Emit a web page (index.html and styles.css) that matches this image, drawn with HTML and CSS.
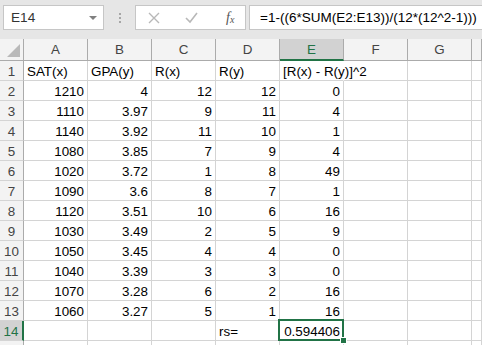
FILE: index.html
```html
<!DOCTYPE html>
<html lang="en">
<head>
    <meta charset="UTF-8">
    <title>Spearman rank - Sheet1</title>
    <link rel="stylesheet" href="styles.css">
</head>
<body>
    <div class="toolbar">
        <div class="name-box">
            <span>E14</span>
            <span class="arrow"></span>
        </div>
        <div class="grip">
            <i></i><i></i><i></i>
        </div>
        <div class="fx-tools">
            <svg width="12" height="12" viewBox="0 0 12 12"><path d="M1 1 L11 11 M11 1 L1 11" stroke="#b8b8b8" stroke-width="1.4" fill="none"/></svg>
            <svg width="13" height="12" viewBox="0 0 13 12"><path d="M1 6 L5 10 L12 1" stroke="#b8b8b8" stroke-width="1.6" fill="none"/></svg>
            <span class="fx">f<sub>x</sub></span>
        </div>
        <div class="formula">=1-((6*SUM(E2:E13))/(12*(12^2-1)))</div>
    </div>

    <div class="sheet">
        <div class="hd corner"><span class="tri"></span></div>
        <div class="hd">A</div><div class="hd">B</div><div class="hd">C</div><div class="hd">D</div>
        <div class="hd sel-col">E</div><div class="hd">F</div><div class="hd">G</div><div class="hd"></div>

        <div class="rh">1</div><div class="c">SAT(x)</div><div class="c">GPA(y)</div><div class="c">R(x)</div><div class="c">R(y)</div><div class="c spill">[R(x) - R(y)]^2</div><div class="c"></div><div class="c"></div><div class="c"></div>
        <div class="rh">2</div><div class="c n">1210</div><div class="c n">4</div><div class="c n">12</div><div class="c n">12</div><div class="c n">0</div><div class="c"></div><div class="c"></div><div class="c"></div>
        <div class="rh">3</div><div class="c n">1110</div><div class="c n">3.97</div><div class="c n">9</div><div class="c n">11</div><div class="c n">4</div><div class="c"></div><div class="c"></div><div class="c"></div>
        <div class="rh">4</div><div class="c n">1140</div><div class="c n">3.92</div><div class="c n">11</div><div class="c n">10</div><div class="c n">1</div><div class="c"></div><div class="c"></div><div class="c"></div>
        <div class="rh">5</div><div class="c n">1080</div><div class="c n">3.85</div><div class="c n">7</div><div class="c n">9</div><div class="c n">4</div><div class="c"></div><div class="c"></div><div class="c"></div>
        <div class="rh">6</div><div class="c n">1020</div><div class="c n">3.72</div><div class="c n">1</div><div class="c n">8</div><div class="c n">49</div><div class="c"></div><div class="c"></div><div class="c"></div>
        <div class="rh">7</div><div class="c n">1090</div><div class="c n">3.6</div><div class="c n">8</div><div class="c n">7</div><div class="c n">1</div><div class="c"></div><div class="c"></div><div class="c"></div>
        <div class="rh">8</div><div class="c n">1120</div><div class="c n">3.51</div><div class="c n">10</div><div class="c n">6</div><div class="c n">16</div><div class="c"></div><div class="c"></div><div class="c"></div>
        <div class="rh">9</div><div class="c n">1030</div><div class="c n">3.49</div><div class="c n">2</div><div class="c n">5</div><div class="c n">9</div><div class="c"></div><div class="c"></div><div class="c"></div>
        <div class="rh">10</div><div class="c n">1050</div><div class="c n">3.45</div><div class="c n">4</div><div class="c n">4</div><div class="c n">0</div><div class="c"></div><div class="c"></div><div class="c"></div>
        <div class="rh">11</div><div class="c n">1040</div><div class="c n">3.39</div><div class="c n">3</div><div class="c n">3</div><div class="c n">0</div><div class="c"></div><div class="c"></div><div class="c"></div>
        <div class="rh">12</div><div class="c n">1070</div><div class="c n">3.28</div><div class="c n">6</div><div class="c n">2</div><div class="c n">16</div><div class="c"></div><div class="c"></div><div class="c"></div>
        <div class="rh">13</div><div class="c n">1060</div><div class="c n">3.27</div><div class="c n">5</div><div class="c n">1</div><div class="c n">16</div><div class="c"></div><div class="c"></div><div class="c"></div>
        <div class="rh sel-row">14</div><div class="c"></div><div class="c"></div><div class="c"></div><div class="c">rs=</div><div class="c n active">0.594406</div><div class="c"></div><div class="c"></div><div class="c"></div>
        <div class="rh"></div><div class="c"></div><div class="c"></div><div class="c"></div><div class="c"></div><div class="c"></div><div class="c"></div><div class="c"></div><div class="c"></div>
    </div>
</body>
</html>
```

FILE: styles.css
```css
body {
    margin: 0;
    width: 482px;
    height: 345px;
    overflow: hidden;
    background-color: #fff;
    font-family: "Liberation Sans", Arial, sans-serif;
    font-size: 13.4px;
    color: #000;
}
.toolbar {
    height: 39px;
    background-color: #e6e6e6;
    display: flex;
    align-items: flex-start;
    padding-top: 5px;
    box-sizing: border-box;
}
.name-box {
    margin-left: 3px;
    width: 101px;
    height: 25px;
    box-sizing: border-box;
    background-color: #fff;
    border: 1px solid #c6c6c6;
    display: flex;
    align-items: center;
    justify-content: space-between;
    padding: 0 6px 0 7px;
    font-size: 13.6px;
    color: #333;
}
.arrow {
    width: 0;
    height: 0;
    border-left: 4px solid transparent;
    border-right: 4px solid transparent;
    border-top: 4px solid #808080;
}
.grip {
    width: 31px;
    height: 25px;
    display: flex;
    flex-direction: column;
    align-items: center;
    justify-content: center;
    gap: 2px;
}
.grip i {
    width: 2px;
    height: 2px;
    background-color: #a6a6a6;
}
.fx-tools {
    width: 111px;
    height: 25px;
    box-sizing: border-box;
    background-color: #fff;
    border: 1px solid #c6c6c6;
    display: flex;
    align-items: center;
    padding-left: 12px;
    gap: 25px;
}
.fx {
    font-family: "Liberation Serif", "Times New Roman", serif;
    font-style: italic;
    font-size: 14px;
    color: #555;
    margin-left: 3px;
}
.fx sub {
    font-size: 10px;
    vertical-align: -1px;
}
.formula {
    margin-left: 3px;
    flex: 1;
    height: 25px;
    box-sizing: border-box;
    background-color: #fff;
    border: 1px solid #c6c6c6;
    border-right: none;
    padding-left: 10px;
    line-height: 23px;
    font-size: 13.5px;
    white-space: nowrap;
    overflow: hidden;
}
.sheet {
    display: grid;
    grid-template-columns: 24px repeat(7, 64px) 1fr;
    grid-template-rows: 22px;
    grid-auto-rows: 20px;
}
.sheet > div {
    box-sizing: border-box;
    border-right: 1px solid #d4d4d4;
    border-bottom: 1px solid #d4d4d4;
    white-space: nowrap;
    overflow: hidden;
}
.hd {
    background-color: #f3f3f3;
    border-right-color: #ababab !important;
    border-bottom-color: #ababab !important;
    text-align: center;
    line-height: 22px;
    color: #444;
}
.corner {
    position: relative;
}
.tri {
    position: absolute;
    right: 3px;
    bottom: 3px;
    width: 0;
    height: 0;
    border-left: 13px solid transparent;
    border-bottom: 13px solid #b9b9b9;
}
.sel-col {
    background-color: #d2d2d2;
    border-bottom: 2px solid #217346 !important;
    color: #217346;
    line-height: 21px;
}
.rh {
    background-color: #f3f3f3;
    border-right-color: #ababab !important;
    text-align: center;
    color: #444;
    line-height: 21px;
}
.sel-row {
    background-color: #d2d2d2;
    border-right: 2px solid #217346 !important;
    color: #217346;
}
.c {
    padding: 0 3px;
    line-height: 21px;
}
.n {
    text-align: right;
}
.sheet > .spill {
    overflow: visible;
    border-right-color: transparent;
}
.sheet > .active {
    overflow: visible;
    position: relative;
}
.active::after {
    content: "";
    position: absolute;
    left: -2px;
    top: -2px;
    right: -1px;
    bottom: -1px;
    border: 2px solid #217346;
}
.active::before {
    content: "";
    position: absolute;
    right: -4px;
    bottom: -4px;
    width: 5px;
    height: 5px;
    background-color: #217346;
    border: 1px solid #fff;
    z-index: 2;
}
```
